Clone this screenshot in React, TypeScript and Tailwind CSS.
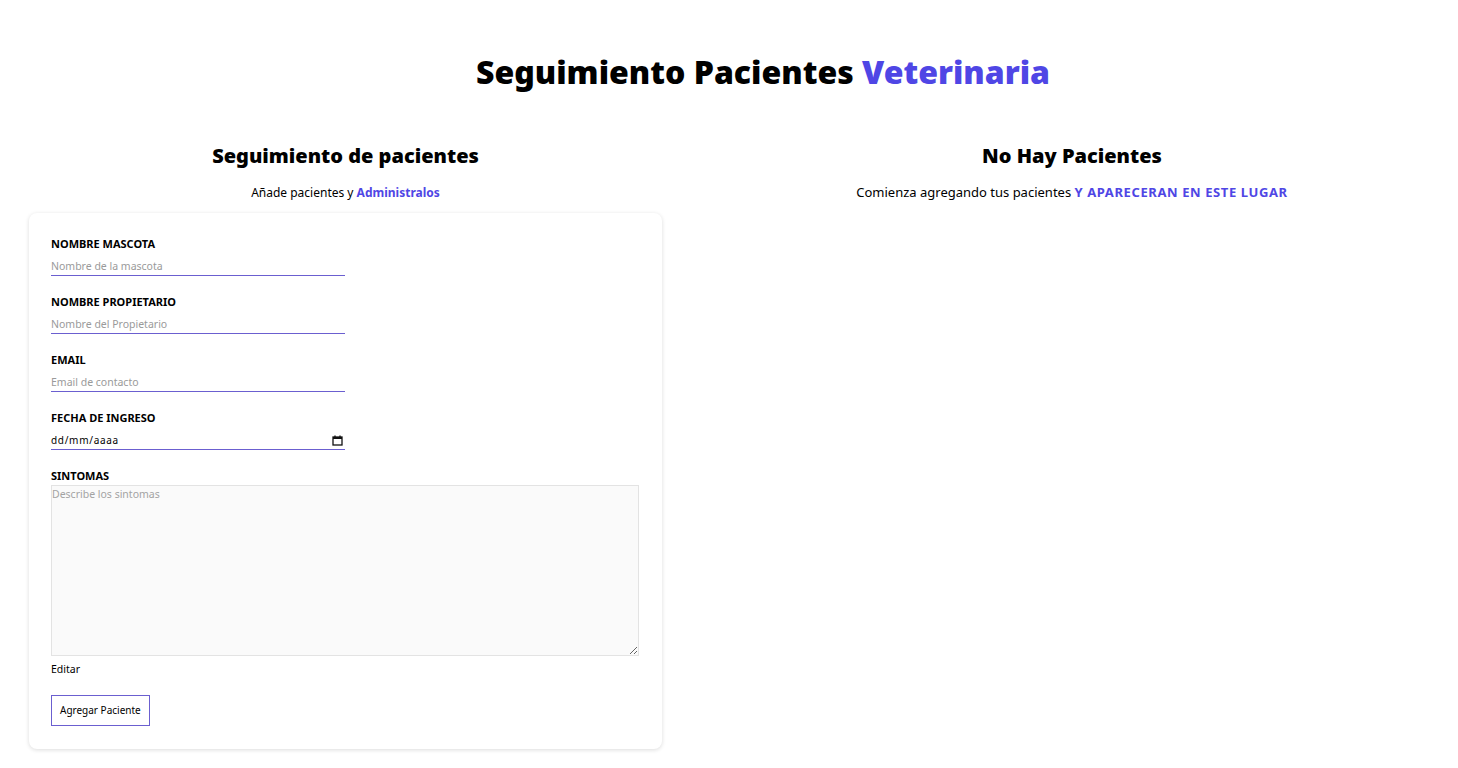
import React from "react";

const FIELDS = [
  { id: "mascota", label: "Nombre Mascota", placeholder: "Nombre de la mascota", type: "text" },
  { id: "propietario", label: "Nombre Propietario", placeholder: "Nombre del Propietario", type: "text" },
  { id: "email", label: "Email", placeholder: "Email de contacto", type: "email" },
];

function CalendarIcon() {
  return (
    <svg width="11" height="11" viewBox="0 0 11 11" fill="none">
      <rect x="1" y="2" width="9" height="8" stroke="#111" strokeWidth="1.3" />
      <rect x="1" y="2" width="9" height="2" fill="#111" />
      <line x1="3" y1="0.5" x2="3" y2="2" stroke="#111" strokeWidth="1.3" />
      <line x1="8" y1="0.5" x2="8" y2="2" stroke="#111" strokeWidth="1.3" />
    </svg>
  );
}

export default function App() {
  return (
    <div className="min-h-screen bg-white text-black pt-[52px] font-['Noto_Sans','Open_Sans',sans-serif]">
      {/* Title */}
      <h1 className="pl-[68px] text-center text-[32px] leading-10 font-black">
        Seguimiento Pacientes <span className="text-[#4f46e5]">Veterinaria</span>
      </h1>

      <div className="mt-[50px] flex">
        {/* Form column */}
        <div className="w-[686px] shrink-0 pl-[29px] pr-[24px]">
          <h2 className="text-center text-xl leading-7 font-black">Seguimiento de pacientes</h2>
          <p className="mt-3 text-center text-[12px] leading-5 pt-px">
            Añade pacientes y <span className="font-bold text-[#4f46e5]">Administralos</span>
          </p>

          <form className="mt-[10px] rounded-lg bg-white pt-[23px] pb-[23px] pl-[22px] pr-[23px] shadow-[0_1px_4px_rgba(0,0,0,0.14)]">
            {FIELDS.map((f) => (
              <div key={f.id} className="mb-[18px]">
                <label htmlFor={f.id} className="block text-[11px] leading-4 font-bold uppercase">
                  {f.label}
                </label>
                <input
                  id={f.id}
                  type={f.type}
                  placeholder={f.placeholder}
                  className="mt-[5px] block h-[19px] w-[294px] border-0 border-b border-solid border-b-[#6b5fd0] text-[10.5px] leading-4 outline-none placeholder:text-[#9a9a9a]"
                />
              </div>
            ))}

            <div className="mb-[18px]">
              <label className="block text-[11px] leading-4 font-bold uppercase">Fecha de Ingreso</label>
              <div className="mt-[5px] flex h-[19px] w-[294px] items-center justify-between border-b border-b-[#6b5fd0] pr-[2px] text-[10px] tracking-[0.7px]">
                <span>dd/mm/aaaa</span>
                <CalendarIcon />
              </div>
            </div>

            <div>
              <label htmlFor="sintomas" className="block text-[11px] leading-4 font-bold uppercase">
                Sintomas
              </label>
              <textarea
                id="sintomas"
                placeholder="Describe los sintomas"
                className="mt-px block h-[171px] w-full border border-[#e3e3e3] bg-[#fafafa] text-[10.5px] leading-4 outline-none placeholder:text-[#a3a3a3]"
              />
            </div>

            <p className="mt-[5px] text-[10.5px] leading-4">Editar</p>

            <button
              type="button"
              className="mt-[18px] h-[31px] border border-[#6b5fd0] bg-white px-[8px] text-[10px]"
            >
              Agregar Paciente
            </button>
          </form>
        </div>

        {/* List column */}
        <div className="flex-1">
          <h2 className="text-center text-xl leading-7 font-black">No Hay Pacientes</h2>
          <p className="mt-3 text-center text-[13px] leading-5">
            Comienza agregando tus pacientes{" "}
            <span className="font-bold tracking-[0.6px] text-[#4f46e5]">Y APARECERAN EN ESTE LUGAR</span>
          </p>
        </div>
      </div>
    </div>
  );
}
